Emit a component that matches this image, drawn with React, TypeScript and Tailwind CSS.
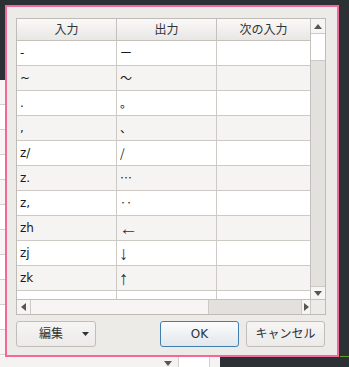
import React from 'react';

const rows: [string, string][] = [
  ['-', 'ー'],
  ['~', '〜'],
  ['.', '。'],
  [',', '、'],
  ['z/', '/'],
  ['z.', '…'],
  ['z,', '‥'],
  ['zh', '←'],
  ['zj', '↓'],
  ['zk', '↑'],
  ['', ''],
];

const arrows = ['←', '↓', '↑'];

const font = { fontFamily: '"DejaVu Sans", "Noto Sans CJK JP", sans-serif' };
const cjk = { fontFamily: '"Noto Sans CJK JP", "DejaVu Sans", sans-serif' };
const arrowFont = { fontFamily: '"Liberation Sans", "DejaVu Sans", sans-serif' };

const Tri = ({ dir }: { dir: 'up' | 'down' | 'left' | 'right' }) => {
  const pts = {
    up: '0,6 4,1 8,6',
    down: '0,1 4,6 8,1',
    left: '6,0 1,4 6,8',
    right: '1,0 6,4 1,8',
  }[dir];
  const vertical = dir === 'up' || dir === 'down';
  return (
    <svg width={vertical ? 8 : 7} height={vertical ? 7 : 8} viewBox={vertical ? '0 0 8 7' : '0 0 7 8'}>
      <polygon points={pts} fill="#555753" />
    </svg>
  );
};

export default function App() {
  return (
    <div className="relative w-[349px] h-[367px] overflow-hidden bg-[#2b3134]" style={font}>
      {/* window behind, left edge */}
      <div className="absolute left-0 top-[80px] w-[12px] h-[290px] bg-white flex flex-col">
        {Array.from({ length: 12 }).map((_, i) => (
          <div key={i} className="h-[25px] shrink-0 border-b border-[#d4d0cc] bg-[#f7f6f4] even:bg-white" />
        ))}
      </div>
      {/* window behind, bottom edge */}
      <div className="absolute left-0 top-[356px] w-[220px] h-[12px] bg-[#f4f3f1] flex">
        <div className="w-[158px]" />
        <div className="w-[20px] flex justify-center pt-[4px]"><Tri dir="down" /></div>
        <div className="w-[32px] bg-white border-l border-r border-[#d4d0cc]" />
      </div>
      <div className="absolute left-[340px] top-[356px] w-[10px] h-px bg-[#6a9a2a]" />

      {/* dialog */}
      <div className="absolute left-[5px] top-[5px] w-[334px] h-[352px] border-2 border-[#f4679a] bg-[#edebe8] px-[9px] pt-[11px]">
        <div className="w-[310px] h-[297px] border border-[#bfbbb6] bg-white flex flex-col">
          <div className="flex h-[280px]">
            {/* table */}
            <div className="w-[294px] flex flex-col overflow-hidden">
              <div className="flex h-[22px] shrink-0 border-b border-[#c4c0bb] bg-gradient-to-b from-[#faf9f8] to-[#e9e7e4] text-[12px] text-[#2e3436]">
                <div className="w-[100px] border-r border-[#c4c0bb] flex items-center justify-center">入力</div>
                <div className="w-[100px] border-r border-[#c4c0bb] flex items-center justify-center">出力</div>
                <div className="flex-1 flex items-center justify-center">次の入力</div>
              </div>
              {rows.map(([a, b], i) => (
                <div
                  key={i}
                  className={`flex h-[25px] shrink-0 border-b border-[#cdc9c5] text-[12px] text-[#1a1a1a] ${i % 2 === 0 ? 'bg-white' : 'bg-[#f5f4f2]'}`}
                >
                  <div className="w-[100px] border-r border-[#cdc9c5] flex items-center pl-[3px]">{a}</div>
                  {arrows.includes(b) ? (
                    <div className="w-[100px] border-r border-[#cdc9c5] flex items-center pl-[2px] text-[19px] leading-none text-[#2e3436]" style={arrowFont}>{b}</div>
                  ) : (
                    <div className="w-[100px] border-r border-[#cdc9c5] flex items-center pl-[3px]" style={cjk}>{b}</div>
                  )}
                  <div className="flex-1" />
                </div>
              ))}
            </div>
            {/* vertical scrollbar */}
            <div className="w-[15px] border-l border-[#c4c0bb] flex flex-col bg-[#e2e1de]">
              <div className="h-[14px] bg-[#f6f5f4] flex items-center justify-center"><Tri dir="up" /></div>
              <div className="h-[28px] bg-white border-t border-b border-[#cdc9c5]" />
              <div className="flex-1" />
              <div className="h-[13px] bg-[#f6f5f4] border-t border-[#cdc9c5] flex items-center justify-center"><Tri dir="down" /></div>
            </div>
          </div>
          {/* horizontal scrollbar */}
          <div className="flex flex-1 border-t border-[#c4c0bb] bg-[#e2e1de]">
            <div className="w-[14px] bg-[#f6f5f4] border-r border-[#cdc9c5] flex items-center justify-center"><Tri dir="left" /></div>
            <div className="w-[178px] bg-[#f6f5f4] border-r border-[#cdc9c5]" />
            <div className="flex-1" />
            <div className="w-[9px] bg-[#f6f5f4] border-l border-[#cdc9c5] flex items-center justify-center"><Tri dir="right" /></div>
            <div className="w-[15px] bg-[#edebe8] border-l border-[#cdc9c5]" />
          </div>
        </div>

        {/* buttons */}
        <div className="flex mt-[6px] h-[26px] text-[12px] text-[#2e3436]">
          <button className="w-[80px] h-full rounded-[3px] border border-[#c1bdb8] bg-gradient-to-b from-[#f6f5f4] to-[#ecebe9] flex items-center pl-[22px] pr-[6px]">
            <span className="flex-1 text-left">編集</span>
            <svg width="7" height="4" viewBox="0 0 7 4"><polygon points="0,0 7,0 3.5,4" fill="#2e3436" /></svg>
          </button>
          <div className="w-[64px]" />
          <button className="w-[79px] h-full rounded-[3px] border border-[#3f7eb3] bg-gradient-to-b from-[#fbfcfd] to-[#e3e7ea] flex items-center justify-center">OK</button>
          <div className="w-[7px]" />
          <button className="w-[79px] h-full rounded-[3px] border border-[#c1bdb8] bg-gradient-to-b from-[#f6f5f4] to-[#ecebe9] flex items-center justify-center">キャンセル</button>
        </div>
      </div>
    </div>
  );
}
